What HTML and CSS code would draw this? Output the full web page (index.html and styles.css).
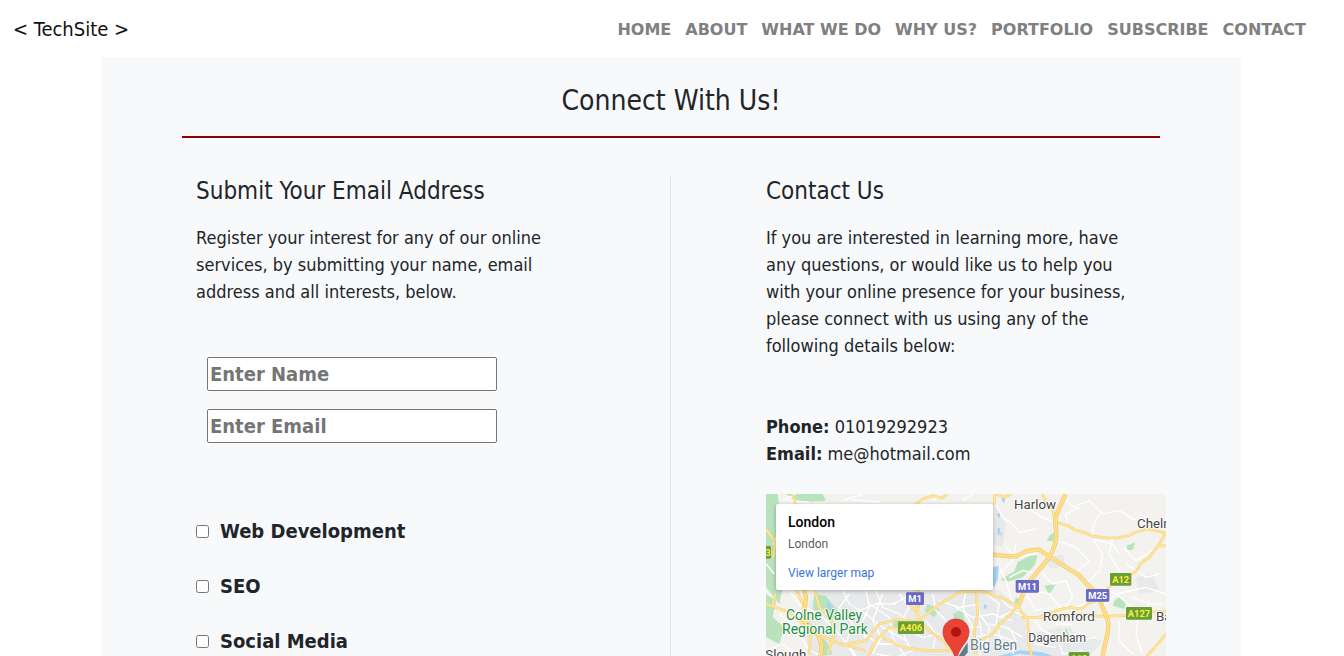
FILE: index.html
```
<!DOCTYPE html>
<html lang="en">
<head>
<meta charset="utf-8">
<title>TechSite</title>
<link rel="stylesheet" href="styles.css">
</head>
<body>
<header class="site-header">
  <a class="brand" href="#">&lt; TechSite &gt;</a>
  <nav class="site-nav">
    <a href="#">HOME</a>
    <a href="#">ABOUT</a>
    <a href="#">WHAT WE DO</a>
    <a href="#">WHY US?</a>
    <a href="#">PORTFOLIO</a>
    <a href="#">SUBSCRIBE</a>
    <a href="#">CONTACT</a>
  </nav>
</header>
<main class="connect">
  <h1 class="connect-title">Connect With Us!</h1>
  <div class="columns">
    <section class="column column-form">
      <h2>Submit Your Email Address</h2>
      <p>Register your interest for any of our online services, by submitting your name, email address and all interests, below.</p>
      <form class="signup">
        <div class="fields">
          <input type="text" aria-label="Name" placeholder="Enter Name">
          <input type="email" aria-label="Email" placeholder="Enter Email">
        </div>
        <div class="interests">
          <label><input type="checkbox">Web Development</label>
          <label><input type="checkbox">SEO</label>
          <label><input type="checkbox">Social Media</label>
        </div>
      </form>
    </section>
    <section class="column">
      <h2>Contact Us</h2>
      <p>If you are interested in learning more, have any questions, or would like us to help you with your online presence for your business, please connect with us using any of the following details below:</p>
      <div class="details">
        <div><strong>Phone:</strong> 01019292923</div>
        <div><strong>Email:</strong> me@hotmail.com</div>
      </div>
      <div class="map">
        <svg class="map-canvas" viewBox="0 0 1200 900" role="img" aria-label="Map of London">
          <rect width="1200" height="900" fill="#f3f2ef"/>
          <path fill="#e8e9eb" d="M150 290 300 250 480 280 700 290 760 340 790 420 880 400 1010 440 960 500 860 540 1200 900H60L130 520 110 380ZM690 40 720 90 710 160 680 150ZM840 195 890 180 900 215 850 225ZM1110 250 1160 240 1180 290 1120 300Z"/>
          <!-- parks and woods -->
          <g fill="#b9e3bd">
            <path d="M0 0H35L45 90 20 150 60 230 40 330 0 280ZM60 0H170L180 20 100 24ZM0 300 30 320 20 370 55 400 40 450 0 430ZM145 300 180 305 215 350 225 380 195 370 175 345 140 350Z"/>
            <path d="M150 420 180 440 200 480 170 485ZM485 330 520 345 505 370 475 350ZM385 375 410 380 400 405 380 395ZM560 360 590 345 595 380 570 390Z"/>
            <path d="M755 205 800 180 815 185 805 215 770 250 730 262 702 258 745 232ZM835 275 868 270 860 288 848 300 840 285ZM850 125 865 115 862 142 842 140ZM1082 155 1108 145 1100 168 1085 168ZM1045 320 1060 308 1080 325 1075 345 1040 335ZM900 395 915 405 910 425 898 412ZM750 310 765 320 755 350 745 330ZM700 120 710 112 705 130Z"/>
          </g>
          <g fill="#a5d3f7">
            <path d="M180 315 195 335 200 350 185 345ZM680 220 698 216 695 255 685 280 678 270ZM705 15 720 8 714 28ZM692 60 703 58 700 75ZM695 100 703 104 700 125 694 120ZM655 330 663 335 660 345 653 342Z"/>
            <path d="M590 486 640 492 690 488 760 469 830 475 900 500 900 512 830 487 760 479 690 498 640 502 590 496Z"/>
          </g>
          <!-- local streets -->
          <g fill="none" stroke="#fff" stroke-width="4" stroke-linejoin="round">
            <path d="M70 290 100 330 160 360 210 410 260 470 300 540M40 360 90 400 130 470 200 500M230 290 250 330 300 360 350 400 420 440M250 300 220 340 260 390 240 450 290 520M300 290 310 340 285 390 300 440M330 290 350 340 400 360 450 400M280 350 330 330 390 330M350 300 320 380 345 430 320 480M310 330 370 370 380 430 420 490M400 300 430 340 400 390 430 460M380 330 420 310 470 300M360 410 410 400 470 430 520 420M290 420 340 450 400 450M330 480 390 490 440 470"/>
            <path d="M500 300 510 350 550 390 570 450M520 320 580 340 640 330M600 290 590 340 620 400 600 460M630 300 640 360 670 400 660 470M570 340 620 370 680 360 740 380M660 300 700 330 690 390 710 450M690 300 730 340 770 350M700 370 740 350 800 380M620 430 680 420 740 440M670 390 720 400 770 430M640 380 650 440 640 490M540 430 580 400 640 400M480 380 510 420 500 470M730 400 750 440 740 480"/>
            <path d="M720 160 750 190 810 180M700 240 740 200 750 150M700 220 720 260 740 330 756 334M730 250 770 230 800 235M780 300 810 350 850 340M690 30 710 70 740 90M730 80 760 115 810 105M780 40 830 70 866 87M890 10 920 40 970 20 1010 60 1060 50 1110 80M905 95 900 60 940 40M870 140 930 160 970 200 930 235 900 225M980 135 1010 180 1000 230 960 270M980 135 1040 150 1060 180M1000 60 980 100 980 130M1070 160 1110 200 1160 170M1040 130 1030 180 1060 230 1040 280"/>
            <path d="M830 240 860 270 900 260 920 310 890 350M800 290 850 300 890 350 960 330M800 370 830 410 880 430 940 420M900 390 920 440 990 430M860 340 870 390 920 390M1010 340 1050 300 1110 350M1010 280 1050 300 1140 280 1200 300M1120 350 1110 420 1130 480M1060 380 1060 440 1100 480M1100 310 1150 330 1190 330M1140 360 1150 320M1080 210 1140 250 1180 240M780 410 810 450 870 460M880 450 890 480 950 470"/>
            <path d="M50 20 90 0M65 20 130 24M230 20 290 0M260 18 340 24M500 20 520 0M590 20 620 0M0 210 25 240M0 470 50 450 90 480"/>
          </g>
          <!-- trunk roads: casing, then fill -->
          <defs>
            <g id="roads">
              <path d="M0 105 28 145 22 190M28 300 20 335M0 330 70 355 110 390 150 420 225 450 300 470M145 285 160 340 195 375 205 420 185 480M90 285 115 340 135 400 130 480"/>
              <path d="M455 325 455 380 420 410 370 400 330 440 300 500M455 380 490 410 530 440 560 470M430 330 465 375 520 330 580 295 640 290 700 310 756 334M456 385 400 375 340 390 300 440 240 450M630 295 635 360 625 410 628 480M700 395 680 420 640 440M350 430 410 460 480 470 560 470"/>
              <path d="M756 334 770 360 785 372 788 450 800 500M756 334 725 370 690 400M765 370 820 370 880 347 915 340 945 345 970 327 1005 315M820 370 900 365 950 360 1010 368M1010 368 1080 364 1160 354 1200 352M1200 420 1165 462 1130 500"/>
              <path d="M869 85 905 94 925 107 960 117 980 127 1030 132 1055 132 1090 124 1110 114 1145 105 1200 117M1200 117 1175 157 1150 190 1125 207 1110 232 1075 250 1025 282 1005 312M1175 157 1200 155M829 0 840 25 860 45 866 80M685 0V32M690 0 715 10 735 0M450 30 470 15 500 5 530 12 545 0M80 0 88 30"/>
            </g>
            <g id="motorways">
              <path d="M898 0C888 32 865 62 868 87 872 122 876 142 850 189 820 232 785 257 770 302L758 334M680 182 730 187 750 187 785 170 820 167 852 189C880 207 920 232 940 244 960 272 980 282 1000 312 1010 352 1025 362 1027 392 1028 432 1010 452 1010 500M110 270 120 310 112 380 150 410 168 450 160 520M455 280V340"/>
            </g>
          </defs>
          <g fill="none" stroke-linejoin="round">
            <use href="#roads" stroke="#f6cf70" stroke-width="8"/>
            <use href="#roads" stroke="#ffe69b" stroke-width="5"/>
            <use href="#motorways" stroke="#f2c65c" stroke-width="13"/>
            <use href="#motorways" stroke="#ffe398" stroke-width="9"/>
            <use href="#motorways" stroke="#f6cf70" stroke-width="2"/>
          </g>
          <g class="shields">
            <rect x="420" y="295" width="54" height="38" rx="4" fill="#6b6bc7"/><text x="447" y="325" fill="#fff">M1</text>
            <rect x="749" y="258" width="70" height="38" rx="4" fill="#6b6bc7"/><text x="784" y="288" fill="#fff">M11</text>
            <rect x="960" y="285" width="70" height="38" rx="4" fill="#6b6bc7"/><text x="995" y="315" fill="#fff">M25</text>
            <rect x="396" y="382" width="78" height="38" rx="4" fill="#689f38"/><text x="435" y="412">A406</text>
            <rect x="1032" y="237" width="64" height="38" rx="4" fill="#689f38"/><text x="1064" y="267">A12</text>
            <rect x="1080" y="339" width="78" height="38" rx="4" fill="#689f38"/><text x="1119" y="369">A127</text>
            <rect x="908" y="474" width="62" height="38" rx="4" fill="#689f38"/><text x="939" y="504">A13</text>
            <rect x="-50" y="156" width="65" height="38" rx="4" fill="#689f38"/><text x="-20" y="186">A413</text>
          </g>
          <g class="places">
            <text x="744" y="44" font-size="40">Harlow</text>
            <text x="1113" y="101" font-size="40">Chelmsford</text>
            <text x="831" y="380" font-size="40">Romford</text>
            <text x="1170" y="382" font-size="40">Basildon</text>
            <text x="787" y="444" font-size="36">Dagenham</text>
            <text x="-2" y="496" font-size="40">Slough</text>
            <text x="60" y="378" font-size="42" fill="#1e8e3e">Colne Valley</text>
            <text x="48" y="420" font-size="42" fill="#1e8e3e">Regional Park</text>
            <text x="612" y="468" font-size="42" fill="#607d8b">Big Ben</text>
          </g>
          <path d="M575 490 605 445V475L585 500Z" fill="#607d8b"/>
          <path d="M570 375C547 375 531 392 531 414 531 447 562 455 570 502 578 455 609 447 609 414 609 392 593 375 570 375Z" fill="#ea4335" stroke="#c5322a" stroke-width="2"/>
          <circle cx="570" cy="414" r="15" fill="#b31412"/>
        </svg>
        <div class="place-card">
          <div class="place-name">London</div>
          <div class="place-address">London</div>
          <a href="#">View larger map</a>
        </div>
      </div>
    </section>
  </div>
</main>
</body>
</html>
```
FILE: styles.css
```
* {
  box-sizing: border-box;
}

body {
  display: flex;
  flex-direction: column;
  height: 100vh;
  margin: 0;
  padding-right: 2px;
  overflow: hidden;
  background: #fff;
  color: #212529;
  font: 18px/27px "DejaVu Sans Condensed", "DejaVu Sans", sans-serif;
}

.site-header {
  display: flex;
  flex: none;
  align-items: center;
  justify-content: space-between;
  padding: 16px 36px 14px 13px;
}

.brand {
  color: #111;
  font-size: 20px;
  text-decoration: none;
}

.site-nav {
  display: flex;
  gap: 14px;
  font-family: "DejaVu Sans", sans-serif;
  font-size: 16px;
  font-weight: 700;
}

.site-nav a {
  color: #808080;
  text-decoration: none;
}

.connect {
  display: flex;
  flex: 1 0 auto;
  flex-direction: column;
  width: 100%;
  max-width: 1140px;
  margin: 0 auto;
  padding-top: 27px;
  background: #f8f9fb;
}

.connect-title {
  margin: 0 81px 38px;
  padding-bottom: 18px;
  border-bottom: 2px solid #8b0000;
  font-size: 28px;
  font-weight: 400;
  line-height: 34px;
  text-align: center;
}

.columns {
  display: grid;
  flex: 1;
  grid-template-columns: 1fr 1fr;
}

.column {
  min-width: 0;
  padding: 0 95px;
}

.column-form {
  border-right: 1px solid #dee2e6;
}

.column h2 {
  margin: 0 0 18px;
  font-size: 24px;
  font-weight: 400;
  line-height: 30px;
}

.column p {
  margin: 0 0 52px;
}

.fields {
  display: flex;
  flex-direction: column;
  gap: 18px;
  max-width: 301px;
  margin-bottom: 75px;
  padding-left: 11px;
}

.fields input {
  height: 34px;
  padding: 1px 2px;
  border: 1px solid #767676;
  border-radius: 2px;
  background: #fff;
  color: #212529;
  font: 700 20px "DejaVu Sans Condensed", "DejaVu Sans", sans-serif;
}

.fields input::placeholder {
  color: #757575;
}

.interests {
  display: flex;
  flex-direction: column;
  gap: 28px;
  font-size: 20px;
  font-weight: 700;
}

.interests label {
  display: flex;
  align-items: center;
  gap: 11px;
}

.interests input {
  width: 13px;
  height: 13px;
  margin: 0;
}

.details {
  margin: 54px 0 27px;
}

.map {
  position: relative;
  width: 400px;
}

.map-canvas {
  display: block;
  width: 100%;
  font-family: Roboto, sans-serif;
}

.shields {
  fill: #ffeb3b;
  font-size: 28px;
  font-weight: 700;
  text-anchor: middle;
}

.places {
  fill: #444;
  stroke: #fff;
  stroke-width: 5px;
  stroke-linejoin: round;
  paint-order: stroke;
}

.place-card {
  position: absolute;
  top: 10px;
  left: 10px;
  width: 217px;
  padding: 8px 12px 7px;
  border-radius: 2px;
  background: #fff;
  box-shadow: 0 1px 4px rgba(0, 0, 0, 0.3);
  color: #5b5b5b;
  font: 12px/20px Roboto, sans-serif;
}

.place-name {
  margin-bottom: 2px;
  color: #000;
  font-size: 14px;
  font-weight: 500;
}

.place-address {
  margin-bottom: 9px;
}

.place-card a {
  display: block;
  color: #3a75d8;
  text-decoration: none;
}
```
